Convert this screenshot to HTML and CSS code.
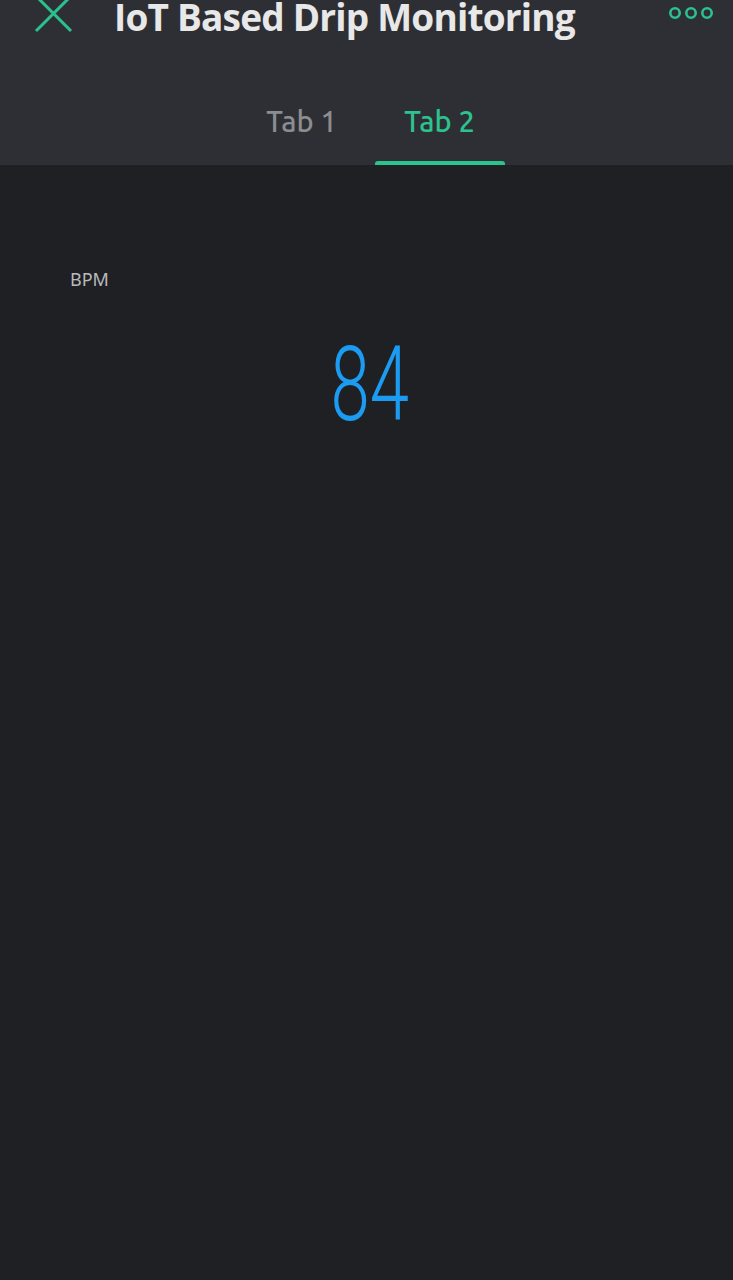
FILE: index.html
```html
<!DOCTYPE html>
<html>
<head>
<meta charset="utf-8">
<link rel="stylesheet" href="styles.css">
</head>
<body>
<header class="header">
  <div class="titlebar">
    <svg class="close" width="40" height="36" viewBox="0 0 40 36">
      <path d="M2 -4 L37 31 M37 -4 L2 31" stroke="#2bc18f" stroke-width="3" fill="none"/>
    </svg>
    <h1 class="title">IoT Based Drip Monitoring</h1>
    <svg class="more" width="46" height="14" viewBox="0 0 46 14">
      <circle cx="7" cy="7" r="4.7" stroke="#2bc18f" stroke-width="2.6" fill="none"/>
      <circle cx="23" cy="7" r="4.7" stroke="#2bc18f" stroke-width="2.6" fill="none"/>
      <circle cx="39" cy="7" r="4.7" stroke="#2bc18f" stroke-width="2.6" fill="none"/>
    </svg>
  </div>
  <nav class="tabs">
    <div class="tab">Tab 1</div>
    <div class="tab active">Tab 2</div>
  </nav>
</header>
<main class="content">
  <div class="label">BPM</div>
  <div class="value"><span>84</span></div>
</main>
</body>
</html>
```
FILE: styles.css
```css
html, body {
  margin: 0;
  padding: 0;
  background: #1f2024;
  height: 100%;
}
body {
  font-family: "Lato", "Noto Sans", sans-serif;
}
.header {
  background: #2e2f34;
  height: 165px;
  display: flex;
  flex-direction: column;
}
.titlebar {
  display: flex;
  align-items: flex-start;
  height: 60px;
}
.close {
  display: block;
  margin-left: 34px;
  margin-top: 0;
}
.title {
  margin: 0 0 0 40px;
  font-family: "Open Sans", "Noto Sans", sans-serif;
  font-size: 37px;
  font-weight: 700;
  color: #e8e8e8;
  line-height: 34px;
  letter-spacing: -0.8px;
  flex: 1;
  white-space: nowrap;
}
.more {
  display: block;
  margin: 6px 19px 0 0;
}
.tabs {
  display: flex;
  justify-content: center;
  margin-top: auto;
  padding-left: 8px;
}
.tab {
  width: 138px;
  height: 105px;
  display: flex;
  align-items: center;
  justify-content: center;
  font-family: "Ubuntu", "Noto Sans", sans-serif;
  font-size: 29px;
  font-weight: 500;
  color: #8c8d91;
  position: relative;
  box-sizing: border-box;
  padding-top: 17px;
}
.tab.active {
  color: #2bc48f;
}
.tab.active::after {
  content: "";
  position: absolute;
  left: 4px;
  right: 4px;
  bottom: 0;
  height: 4px;
  border-radius: 3px 3px 0 0;
  background: #2bc48f;
}
.content {
  padding-top: 103px;
}
.label {
  margin-left: 70px;
  font-family: "Noto Sans", sans-serif;
  font-size: 18px;
  color: #b9babd;
  line-height: 22px;
}
.value {
  display: flex;
  justify-content: center;
  margin-top: 40px;
  padding-left: 6px;
}
.value span {
  font-family: "Roboto", sans-serif;
  font-weight: 300;
  font-size: 104px;
  line-height: 110px;
  color: #1b9cf2;
  display: inline-block;
  transform: scaleX(0.68);
}
```
